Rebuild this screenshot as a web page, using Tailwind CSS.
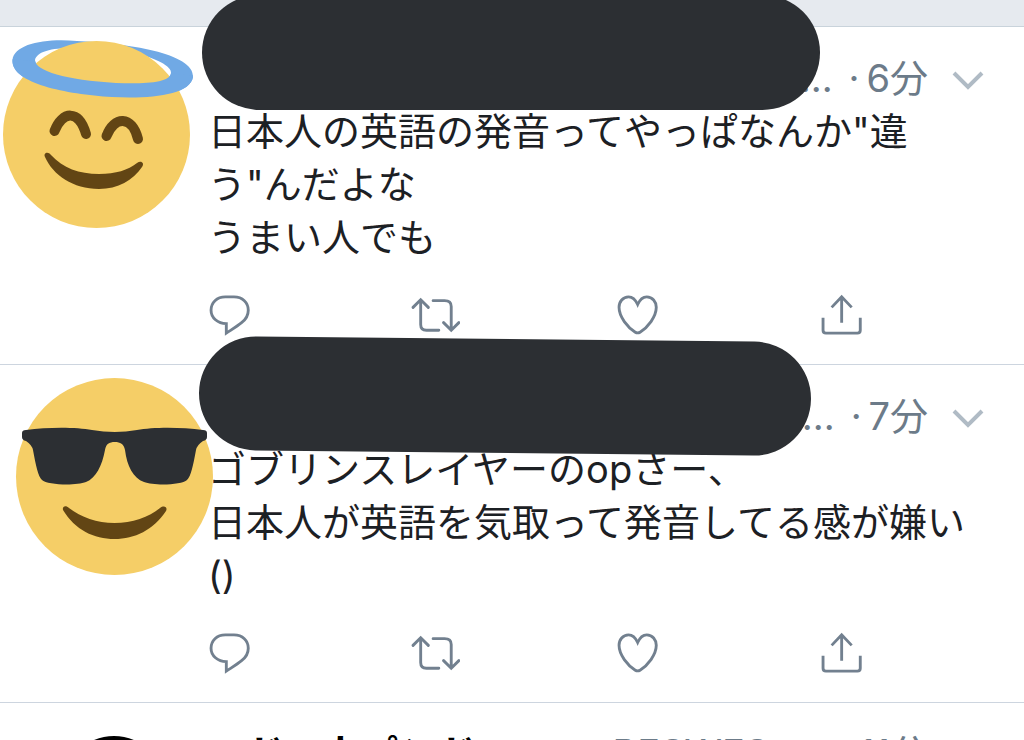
<!DOCTYPE html>
<html lang="ja">

<head>
    <meta charset="UTF-8">
    <meta name="viewport" content="width=device-width, initial-scale=1.0">
    <script src="https://cdn.jsdelivr.net/npm/@tailwindcss/browser@4"></script>
    <title>タイムライン</title>
</head>

<body class="h-screen overflow-hidden bg-white font-['Inter','Noto_Sans_CJK_JP',sans-serif] text-[38px] leading-[53px] text-[#1c2024]">
    <svg class="hidden">
        <symbol id="reply" viewBox="-1 -1 52 44">
            <path d="M17 2h9c9 0 15 6 15 14 0 6-3 10-7 13-5 4-10 7-16 11v-10C9 30 2 24 2 16 2 8 8 2 17 2z" />
        </symbol>
        <symbol id="retweet" viewBox="-1 -1 52 44">
            <path d="M2 13l8-8 8 8M10 6v25c0 4 2 6 6 6h13M23 6h12c4 0 7 2 7 6v24M34 29l8 8 8-8" />
        </symbol>
        <symbol id="like" viewBox="-1 -1 52 44">
            <path d="M21.500 10C19 4.500 16 2 12 2 6 2 2 7 2 13c0 10 9 21 17 26q2.500 1.500 5 0C32 34 41 23 41 13 41 7 37 2 31 2c-4 0-7 2.500-9.500 8z" />
        </symbol>
        <symbol id="share" viewBox="-1 -1 52 44">
            <path d="M11 13L21.500 2 32 13M21.500 3v26M2 24v13q0 3 3 3h33q3 0 3-3V24" />
        </symbol>
        <symbol id="chevron" viewBox="0 0 32 20">
            <path d="M2 2l14 14L30 2" />
        </symbol>
    </svg>

    <div class="h-[27px] border-b border-[#c9d3db] bg-[#e6eaef]"></div>

    <main>
        <article class="relative border-b border-[#cdd5df] pt-[25px] pr-10 pb-[29px] pl-[208px]">
            <svg class="absolute top-0 left-0 h-[210px] w-[200px]" viewBox="0 27 200 210" role="img" aria-label="天使の顔">
                <defs>
                    <clipPath id="front">
                        <path d="M0 58L200 76V120H0z" />
                    </clipPath>
                    <path id="halo" fill="#70a9e5" fill-rule="evenodd" d="M12.500 60C14 44 45 38 77 41C125 43 195 53 193 77C190 95 151 99 112 97C65 94 11 83 12.500 60zM35 60C35 71 66 80 116 83C145 84 170 83 171 73C172 66 155 58 135 53C120 50 105 49 93 49C62 46 37 49 35 60z" />
                </defs>
                <use href="#halo" />
                <circle cx="96.500" cy="134.500" r="93.500" fill="#f5ce67" />
                <use href="#halo" clip-path="url(#front)" />
                <path d="M54.500 131C62 111 79 109 86 134M106.500 136C114 116 132 115 138 139" fill="none" stroke="#624514" stroke-width="10" stroke-linecap="round" />
                <path fill="#624514" d="M45 157C43 153 48 151 51 155C63 168 79 174 99 174C116 174 128 170 137 163C141 160 145 163 142 167C133 180 118 189 99 189C73 189 53 175 45 157z" />
            </svg>
            <header class="flex items-center justify-end text-[#6c7b89]">
                <div class="absolute -top-8 left-[202px] z-10 h-[115px] w-[618px] rounded-full bg-[#2c2f33]"></div>
                <span>...</span>
                <time class="ml-4">·&thinsp;6分</time>
                <button class="mt-1 ml-6" aria-label="メニュー">
                    <svg class="h-5 w-8 fill-none stroke-[#b0bbc5] stroke-4"><use href="#chevron" /></svg>
                </button>
            </header>
            <p>日本人の英語の発音ってやっぱなんか"違<br>う"んだよな<br>うまい人でも</p>
            <div class="mt-[30px] grid h-[41px] grid-cols-[202px_206px_204px_50px] items-center">
                <button aria-label="返信"><svg class="h-[42px] w-[50px] fill-none stroke-[#72808f] stroke-3"><use href="#reply" /></svg></button>
                <button aria-label="リツイート"><svg class="h-[42px] w-[50px] fill-none stroke-[#72808f] stroke-3 [stroke-linecap:round]"><use href="#retweet" /></svg></button>
                <button aria-label="いいね"><svg class="h-[42px] w-[50px] fill-none stroke-[#72808f] stroke-3"><use href="#like" /></svg></button>
                <button aria-label="共有"><svg class="h-[42px] w-[50px] fill-none stroke-[#72808f] stroke-3"><use href="#share" /></svg></button>
            </div>
        </article>

        <article class="relative border-b border-[#cdd5df] pt-[25px] pr-10 pb-[29px] pl-[208px]">
            <svg class="absolute top-0 left-0 h-[220px] w-[220px]" viewBox="0 365 220 220" role="img" aria-label="サングラスの顔">
                <circle cx="114.500" cy="476.500" r="98.500" fill="#f5ce67" />
                <path fill="#2c2f33" d="M22 433Q22 430 26 430C48 427 76 427 92 430Q115 434 137 430C153 427 181 427 203 430Q207 430 207 433V437Q207 440 203 441Q197 445 196 450C193 466 191 476 187 480C182 485 154 486 144 482C133 478 127 466 125 450C124 444 120 442 115 442C109 442 106 444 105 450C102 466 96 478 86 482C76 486 47 485 42 480C38 476 36 466 33 450Q32 445 26 441Q22 440 22 437z" />
                <path fill="#624514" d="M63 510C62 506 66 505 69 508C81 517 97 523 114.500 523C132 523 149 517 160 508C164 505 168 507 166 511C153 530 135 539 114.500 539C94 539 75 530 63 510z" />
            </svg>
            <header class="flex items-center justify-end text-[#6c7b89]">
                <div class="absolute -top-[26px] left-[199px] z-10 h-[114px] w-[612px] rotate-[0.6deg] rounded-full bg-[#2c2f33]"></div>
                <span>...</span>
                <time class="ml-4">·&thinsp;7分</time>
                <button class="mt-1 ml-6" aria-label="メニュー">
                    <svg class="h-5 w-8 fill-none stroke-[#b0bbc5] stroke-4"><use href="#chevron" /></svg>
                </button>
            </header>
            <p>ゴブリンスレイヤーのopさー、<br>日本人が英語を気取って発音してる感が嫌い<br>()</p>
            <div class="mt-[30px] grid h-[41px] grid-cols-[202px_206px_204px_50px] items-center">
                <button aria-label="返信"><svg class="h-[42px] w-[50px] fill-none stroke-[#72808f] stroke-3"><use href="#reply" /></svg></button>
                <button aria-label="リツイート"><svg class="h-[42px] w-[50px] fill-none stroke-[#72808f] stroke-3 [stroke-linecap:round]"><use href="#retweet" /></svg></button>
                <button aria-label="いいね"><svg class="h-[42px] w-[50px] fill-none stroke-[#72808f] stroke-3"><use href="#like" /></svg></button>
                <button aria-label="共有"><svg class="h-[42px] w-[50px] fill-none stroke-[#72808f] stroke-3"><use href="#share" /></svg></button>
            </div>
        </article>

        <article class="relative pt-6 pr-10 pl-[208px]">
            <div class="absolute top-[33px] left-[62px] size-[104px] rounded-full bg-black"></div>
            <header class="flex items-center text-[#6c7b89]">
                <strong class="text-black">マド&emsp;人パンド</strong>
                <span class="ml-8">@</span>
                <span class="ml-auto">BESWES</span>
                <time class="ml-18">·&thinsp;11分</time>
                <button class="mt-1 ml-6" aria-label="メニュー">
                    <svg class="h-5 w-8 fill-none stroke-[#b0bbc5] stroke-4"><use href="#chevron" /></svg>
                </button>
            </header>
        </article>
    </main>
</body>

</html>
